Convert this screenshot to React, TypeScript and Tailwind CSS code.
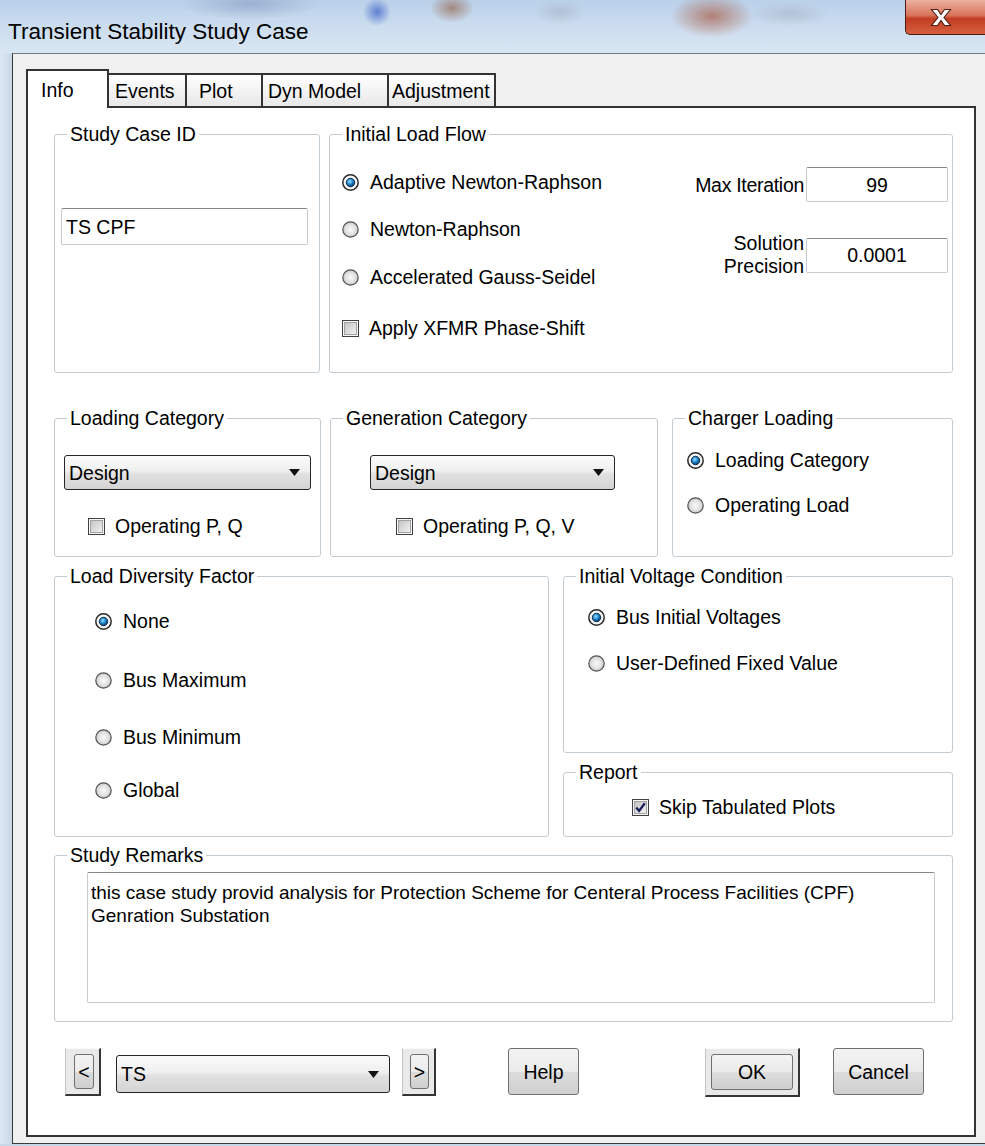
import type { ReactNode } from 'react';

// Win7-style option dot
function RadioMark({ on }: { on?: boolean }) {
  return (
    <svg width="17" height="17" viewBox="0 0 17 17" className="shrink-0">
      <defs>
        <radialGradient id="radioOff" cx="50%" cy="50%" r="55%">
          <stop offset="0%" stopColor="#fafafa" />
          <stop offset="65%" stopColor="#dedede" />
          <stop offset="100%" stopColor="#b4b4b4" />
        </radialGradient>
        <radialGradient id="radioDot" cx="42%" cy="38%" r="62%">
          <stop offset="0%" stopColor="#9be0ff" />
          <stop offset="55%" stopColor="#1d86cf" />
          <stop offset="100%" stopColor="#0c3761" />
        </radialGradient>
      </defs>
      <circle cx="8.5" cy="8.5" r="7.7" fill={on ? '#f4f4f4' : 'url(#radioOff)'} stroke={on ? '#2a2a2a' : '#555'} strokeWidth={on ? 1.5 : 1.2} />
      {on && <circle cx="8.5" cy="8.5" r="4.2" fill="url(#radioDot)" stroke="#10304f" strokeWidth="1" />}
    </svg>
  );
}

function CheckMark({ on }: { on?: boolean }) {
  return (
    <svg width="17" height="17" viewBox="0 0 17 17" className="shrink-0">
      <defs>
        <linearGradient id="checkFill" x1="0" y1="0" x2="1" y2="1">
          <stop offset="0" stopColor="#c2c2c2" />
          <stop offset="1" stopColor="#f4f4f4" />
        </linearGradient>
      </defs>
      <rect x="0.5" y="0.5" width="16" height="16" fill="#f8f8f8" stroke="#404040" />
      <rect x="2.5" y="2.5" width="12" height="12" fill="url(#checkFill)" stroke="#a2a2a2" />
      {on && <path d="M4.3 8.6 L7.1 12 L12.8 4.2" fill="none" stroke="#1b1f58" strokeWidth="2.3" />}
    </svg>
  );
}

function Radio({ label, on, className = '' }: { label: string; on?: boolean; className?: string }) {
  return (
    <div className={`flex items-center h-[22px] gap-[11px] whitespace-nowrap ${className}`}>
      <RadioMark on={on} />
      <span>{label}</span>
    </div>
  );
}

function Check({ label, on, className = '' }: { label: string; on?: boolean; className?: string }) {
  return (
    <div className={`flex items-center h-[22px] gap-[10px] whitespace-nowrap ${className}`}>
      <CheckMark on={on} />
      <span>{label}</span>
    </div>
  );
}

function Group({ title, className = '', children }: { title: string; className?: string; children?: ReactNode }) {
  return (
    <fieldset className={`border border-[#c3cbd2] rounded-[3px] ${className}`}>
      <legend className="ml-[12px] px-[3px] leading-[22px] whitespace-nowrap">{title}</legend>
      {children}
    </fieldset>
  );
}

function TextBox({ value, center, className = '' }: { value: string; center?: boolean; className?: string }) {
  return (
    <div className={`flex items-center bg-white border border-[#c6cbd0] border-t-[#85878a] rounded-[2px] ${center ? 'justify-center' : 'pl-[4px]'} ${className}`}>
      {value}
    </div>
  );
}

function Combo({ value, className = '' }: { value: string; className?: string }) {
  return (
    <div className={`flex items-center justify-between rounded-[3px] border-[1.5px] border-[#262626] bg-[linear-gradient(to_bottom,#fbfbfb_0%,#efefef_45%,#e1e1e1_55%,#d4d4d4_100%)] pl-[4px] pr-[10px] ${className}`}>
      <span>{value}</span>
      <svg width="11" height="7" viewBox="0 0 11 7"><path d="M0 0 H11 L5.5 7 Z" fill="#111" /></svg>
    </div>
  );
}

const buttonFace = 'rounded-[3px] border border-[#6f6f6f] bg-[linear-gradient(to_bottom,#f3f3f3_0%,#ebebeb_50%,#dcdcdc_52%,#cfcfcf_100%)] flex items-center justify-center';

// raised frame around the default / spin buttons
function FramedButton({ children, className = '', pad = '' }: { children: ReactNode; className?: string; pad?: string }) {
  return (
    <div className={`flex shrink-0 bg-[#e9e9e9] border-t border-l border-t-[#fafafa] border-l-[#c4c4c4] border-b-2 border-r-2 border-b-[#353535] border-r-[#353535] ${pad} ${className}`}>
      <div className={`flex-1 ${buttonFace}`}>{children}</div>
    </div>
  );
}

function TitleBar() {
  return (
    <div className="h-[53px] shrink-0 flex items-start bg-[radial-gradient(ellipse_70px_16px_at_250px_4px,rgba(95,115,160,0.35),transparent),radial-gradient(ellipse_14px_14px_at_377px_12px,rgba(30,70,190,0.6),transparent),radial-gradient(ellipse_22px_15px_at_452px_8px,rgba(140,75,40,0.55),transparent),radial-gradient(ellipse_26px_12px_at_560px_12px,rgba(150,155,170,0.35),transparent),radial-gradient(ellipse_42px_22px_at_712px_16px,rgba(165,70,40,0.6),transparent),radial-gradient(ellipse_40px_12px_at_790px_14px,rgba(150,155,170,0.35),transparent),linear-gradient(to_bottom,#bad1ea,#cfdff0_60%,#d9e6f3)]">
      <div className="pl-[8px] pt-[20px] text-[22.5px] leading-[24px] whitespace-nowrap">Transient Stability Study Case</div>
      <div className="ml-auto w-[80px] h-[35px] flex items-center justify-center rounded-bl-[5px] border-l border-b border-[#4a1c12] bg-[linear-gradient(to_bottom,#eab2a2_0%,#d8735a_45%,#c23d22_55%,#d4603f_100%)]">
        <svg width="24" height="19" viewBox="0 0 24 19" className="-ml-[10px]">
          <path d="M2.5 1.5 H8.5 L12 6.5 L15.5 1.5 H21.5 L15 9.5 L21.5 17.5 H15.5 L12 12.5 L8.5 17.5 H2.5 L9 9.5 Z" fill="#fff" stroke="#4d1f16" strokeWidth="1.1" />
        </svg>
      </div>
    </div>
  );
}

function TabStrip() {
  const off = 'h-[33px] flex items-center border-t-2 border-r-2 border-[#333] bg-gradient-to-b from-white to-[#e8e8e8] whitespace-nowrap';
  return (
    <div className="flex items-end h-[37px]">
      <div className="relative z-10 w-[83px] h-[39px] -mb-[2px] bg-white border-2 border-b-0 border-[#333] pl-[13px] pt-[8px]">Info</div>
      <div className={`w-[78px] pl-[6px] ${off}`}>Events</div>
      <div className={`w-[76px] pl-[12px] ${off}`}>Plot</div>
      <div className={`w-[126px] pl-[5px] ${off}`}>Dyn Model</div>
      <div className={`w-[107px] pl-[3px] ${off}`}>Adjustment</div>
    </div>
  );
}

export default function App() {
  return (
    <div className="w-[985px] h-[1146px] overflow-hidden flex flex-col bg-[#cfdcea] font-['Liberation_Sans',Arial,sans-serif] text-[19.5px] leading-[22px] text-black">
      <TitleBar />
      <div className="flex h-[1091px] shrink-0">
        <div className="w-[12px] shrink-0 bg-gradient-to-r from-[#dce7f3] to-[#c8d7e7]" />
        <div className="flex-1 bg-[#f0f0f0] border-l border-t border-b border-l-[#3a3a3a] border-t-[#6f7a86] border-b-[#3a3a3a] pl-[13px] pt-[15px]">
          <TabStrip />
          <div className="w-[950px] h-[1031px] bg-white border-2 border-[#333] pl-[26px] pt-[15px]">
            {/* id + load flow */}
            <div className="flex gap-[9px]">
              <Group title="Study Case ID" className="w-[266px] h-[250px]">
                <div className="pl-[6px] pt-[63px]">
                  <TextBox value="TS CPF" className="w-[247px] h-[37px]" />
                </div>
              </Group>
              <Group title="Initial Load Flow" className="w-[624px] h-[250px]">
                <div className="flex justify-between pl-[12px] pr-[4px]">
                  <div className="flex flex-col">
                    <Radio on label="Adaptive Newton-Raphson" className="mt-[26px]" />
                    <Radio label="Newton-Raphson" className="mt-[25px]" />
                    <Radio label="Accelerated Gauss-Seidel" className="mt-[26px]" />
                    <Check label="Apply XFMR Phase-Shift" className="mt-[29px]" />
                  </div>
                  <div className="flex flex-col items-end pt-[22px]">
                    <div className="flex items-center gap-[2px]">
                      <span className="tracking-[-0.3px]">Max Iteration</span>
                      <TextBox value="99" center className="w-[142px] h-[35px]" />
                    </div>
                    <div className="flex items-center gap-[2px] mt-[30px]">
                      <span className="text-right leading-[23px]">Solution<br />Precision</span>
                      <TextBox value="0.0001" center className="w-[142px] h-[35px]" />
                    </div>
                  </div>
                </div>
              </Group>
            </div>

            {/* categories */}
            <div className="flex mt-[34px]">
              <Group title="Loading Category" className="w-[267px] h-[150px]">
                <div className="pl-[9px] pt-[26px]">
                  <Combo value="Design" className="w-[247px] h-[35px]" />
                </div>
                <Check label="Operating P, Q" className="ml-[33px] mt-[25px]" />
              </Group>
              <Group title="Generation Category" className="w-[328px] h-[150px] ml-[9px]">
                <div className="pl-[39px] pt-[26px]">
                  <Combo value="Design" className="w-[245px] h-[35px]" />
                </div>
                <Check label="Operating P, Q, V" className="ml-[65px] mt-[25px]" />
              </Group>
              <Group title="Charger Loading" className="w-[281px] h-[150px] ml-[14px]">
                <div className="flex flex-col pl-[14px]">
                  <Radio on label="Loading Category" className="mt-[20px]" />
                  <Radio label="Operating Load" className="mt-[23px]" />
                </div>
              </Group>
            </div>

            {/* diversity / voltage / report */}
            <div className="flex gap-[14px] mt-[8px]">
              <Group title="Load Diversity Factor" className="w-[495px] h-[272px]">
                <div className="flex flex-col pl-[40px]">
                  <Radio on label="None" className="mt-[23px]" />
                  <Radio label="Bus Maximum" className="mt-[37px]" />
                  <Radio label="Bus Minimum" className="mt-[35px]" />
                  <Radio label="Global" className="mt-[31px]" />
                </div>
              </Group>
              <div className="flex flex-col gap-[8px]">
                <Group title="Initial Voltage Condition" className="w-[390px] h-[188px]">
                  <div className="flex flex-col pl-[24px]">
                    <Radio on label="Bus Initial Voltages" className="mt-[19px]" />
                    <Radio label="User-Defined Fixed Value" className="mt-[24px]" />
                  </div>
                </Group>
                <Group title="Report" className="w-[390px] h-[76px]">
                  <Check on label="Skip Tabulated Plots" className="ml-[68px] mt-[13px]" />
                </Group>
              </div>
            </div>

            {/* remarks */}
            <Group title="Study Remarks" className="w-[899px] h-[178px] mt-[7px]">
              <div className="ml-[32px] mt-[6px] w-[848px] h-[131px] bg-white border border-[#c6cbd0] border-t-[#85878a] rounded-[2px] pl-[3px] pt-[8px] leading-[23px] text-[19px]">
                <div className="whitespace-nowrap">this case study provid analysis for Protection Scheme for Centeral Process Facilities (CPF)</div>
                <div className="whitespace-nowrap">Genration Substation</div>
              </div>
            </Group>

            {/* footer buttons */}
            <div className="flex items-start mt-[26px]">
              <FramedButton className="ml-[11px] w-[36px] h-[48px]" pad="pl-[8px] pr-[5px] pt-[5px] pb-[5px]">&lt;</FramedButton>
              <Combo value="TS" className="ml-[15px] mt-[7px] w-[274px] h-[38px]" />
              <FramedButton className="ml-[12px] w-[34px] h-[48px]" pad="pl-[7px] pr-[5px] pt-[5px] pb-[5px]">&gt;</FramedButton>
              <div className={`ml-[72px] w-[71px] h-[47px] ${buttonFace}`}>Help</div>
              <FramedButton className="ml-[126px] w-[95px] h-[49px]" pad="p-[5px]">OK</FramedButton>
              <div className={`ml-[33px] w-[91px] h-[47px] ${buttonFace}`}>Cancel</div>
            </div>
          </div>
        </div>
      </div>
      <div className="h-[2px] bg-[#c8d7e7]" />
    </div>
  );
}
